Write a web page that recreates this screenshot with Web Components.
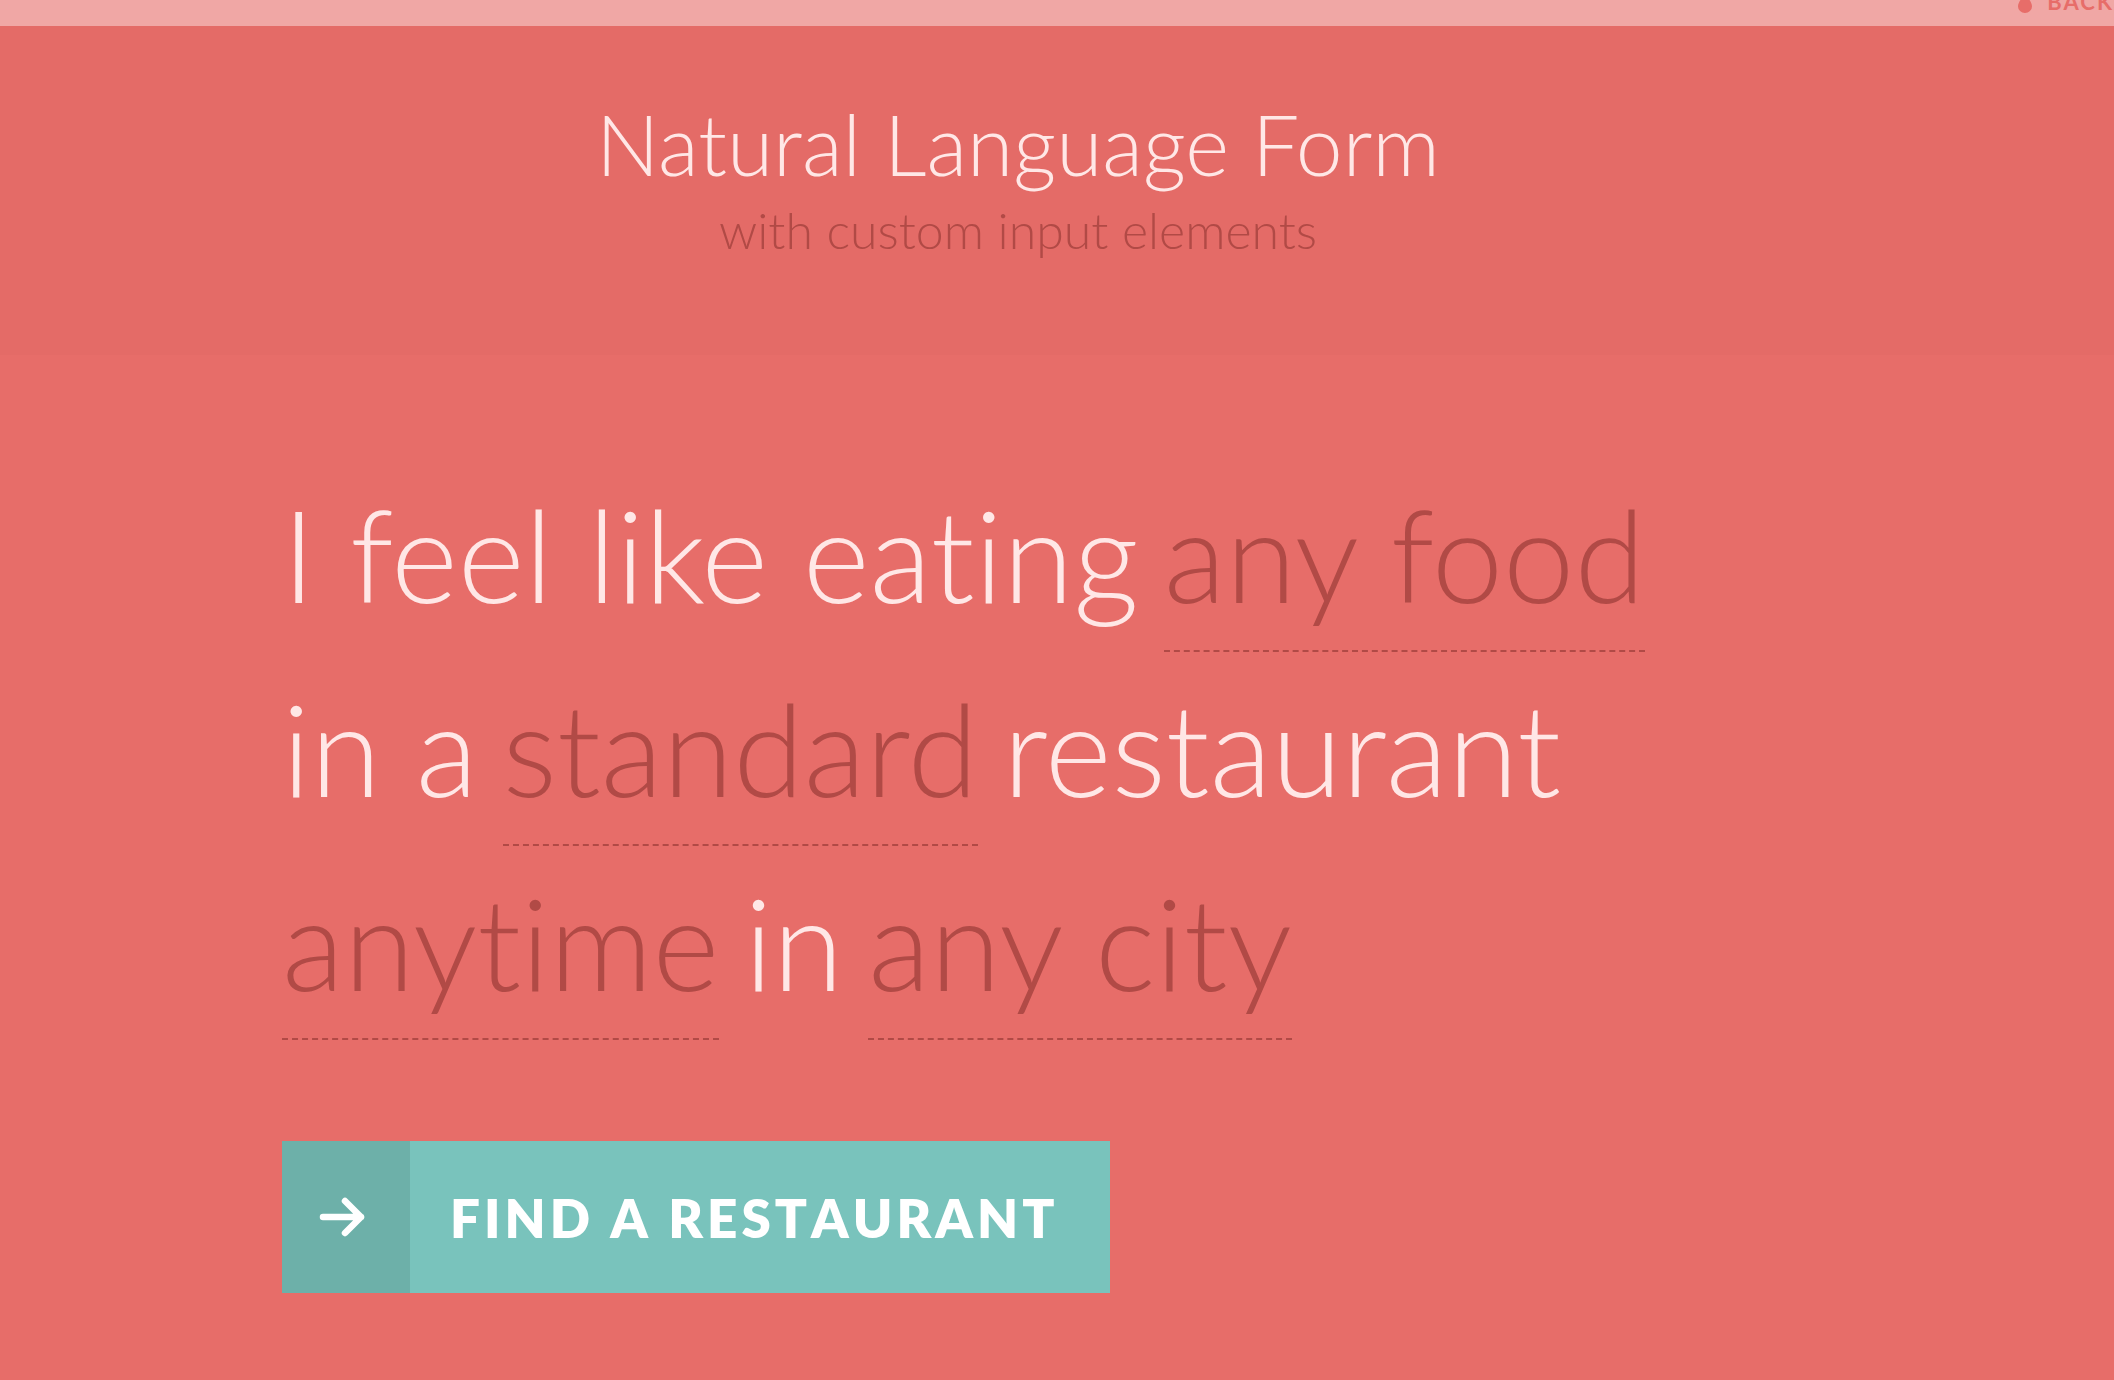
<!DOCTYPE html>
<html lang="en">
<head>
<meta charset="utf-8">
<title>Natural Language Form</title>
<style>
  body { margin: 0; min-height: 100vh; background: #e76d69; font-family: Lato, "Liberation Sans", sans-serif; font-variant-ligatures: none; overflow-x: hidden; }
</style>
</head>
<body>
<nl-page>
  <nl-topbar slot="top">Back</nl-topbar>
  <nl-header slot="header">Natural Language Form<span slot="sub">with custom input elements</span></nl-header>
  <nl-form></nl-form>
</nl-page>

<script>
const define = (name, html) => customElements.define(name, class extends HTMLElement {
  constructor() {
    super();
    this.attachShadow({ mode: 'open' }).innerHTML = html;
  }
});

define('nl-page', `
<style>
  :host { display: flex; flex-direction: column; min-height: 100vh; }
  main { padding: 103px 282px 80px; }
</style>
<slot name="top"></slot>
<slot name="header"></slot>
<main><slot></slot></main>`);

define('nl-topbar', `
<style>
  :host { display: block; height: 26px; background: rgba(255,255,255,.4); overflow: hidden; }
  nav { display: flex; justify-content: flex-end; align-items: flex-end; height: 15px; }
  a { display: flex; align-items: center; gap: 15px; color: #e76d69; font-size: 22px; line-height: 26px; font-weight: 700; letter-spacing: 2px; text-transform: uppercase; text-decoration: none; white-space: nowrap; }
  svg { display: block; width: 14px; height: 22px; }
</style>
<nav><a href="#"><svg viewBox="0 0 14 22" aria-hidden="true"><path d="M7 0C8 6 14 10 14 15.500a7 6.500 0 0 1-14 0C0 10 6 6 7 0Z" fill="currentColor"/></svg><span><slot></slot></span></a></nav>`);

define('nl-header', `
<style>
  :host { display: block; padding: 63px 78px 93px 0; text-align: center; background: rgba(0,0,0,.01); }
  h1 { margin: 0; font-size: 84px; line-height: 109px; font-weight: 300; color: #ffe7e6; }
  p { margin: 0; font-size: 50px; line-height: 64px; font-weight: 300; color: #b14a46; }
</style>
<h1><slot></slot></h1>
<p><slot name="sub"></slot></p>`);

const fieldStyle = `<style>
  :host { display: block; }
  select, input { display: block; box-sizing: content-box; appearance: none; field-sizing: content; height: 192px; margin: 0; padding: 0; border: 0; border-bottom: 2px dashed #b14a46; border-radius: 0; background: none; color: #b14a46; font: inherit; line-height: 192px; }
  select { cursor: pointer; }
</style>`;

customElements.define('nl-select', class extends HTMLElement {
  connectedCallback() {
    const root = this.attachShadow({ mode: 'open' });
    root.innerHTML = fieldStyle + '<select></select>';
    const select = root.querySelector('select');
    select.setAttribute('aria-label', this.getAttribute('label'));
    for (const text of this.getAttribute('options').split(',')) select.add(new Option(text));
  }
});

customElements.define('nl-input', class extends HTMLElement {
  connectedCallback() {
    const root = this.attachShadow({ mode: 'open' });
    root.innerHTML = fieldStyle + '<input type="text">';
    const input = root.querySelector('input');
    input.setAttribute('aria-label', this.getAttribute('label'));
    input.value = this.getAttribute('value');
  }
});

define('nl-submit', `
<style>
  :host { display: block; margin-top: 101px; }
  button { display: flex; align-items: stretch; height: 152px; margin: 0; padding: 0; border: 0; background: #79c3bc; color: #fff; font: 800 53px/154px Lato, "Liberation Sans", sans-serif; font-kerning: none; letter-spacing: 4px; text-transform: uppercase; cursor: pointer; }
  i { display: flex; align-items: center; justify-content: center; box-sizing: border-box; width: 128px; padding-right: 8px; background: #6db0a9; }
  svg { display: block; width: 46px; height: 40px; }
  span { padding: 0 52px 0 40px; }
</style>
<button type="submit"><i><svg viewBox="0 0 46 40" aria-hidden="true" fill="none" stroke="#fff" stroke-width="6.500" stroke-linecap="round" stroke-linejoin="round"><path d="M4 20H42M26 4L42 20L26 36"/></svg></i><span><slot></slot></span></button>`);

define('nl-form', `
<style>
  :host { display: block; font-size: 128px; line-height: 192px; font-weight: 300; color: #ffe7e6; }
  form { margin: 0; }
  .line { display: flex; align-items: baseline; gap: 0 25px; white-space: nowrap; }
</style>
<form>
  <div class="line"><span>I feel like eating</span><nl-select label="Food" options="any food,Indian,French,Japanese,Italian"></nl-select></div>
  <div class="line"><span>in a</span><nl-select label="Kind of restaurant" options="standard,fancy,hip,traditional,romantic"></nl-select><span>restaurant</span></div>
  <div class="line"><nl-select label="Time" options="anytime,7 p.m.,8 p.m.,9 p.m."></nl-select><span>in</span><nl-input label="City" value="any city"></nl-input></div>
  <nl-submit>Find a restaurant</nl-submit>
</form>`);
</script>
</body>
</html>
